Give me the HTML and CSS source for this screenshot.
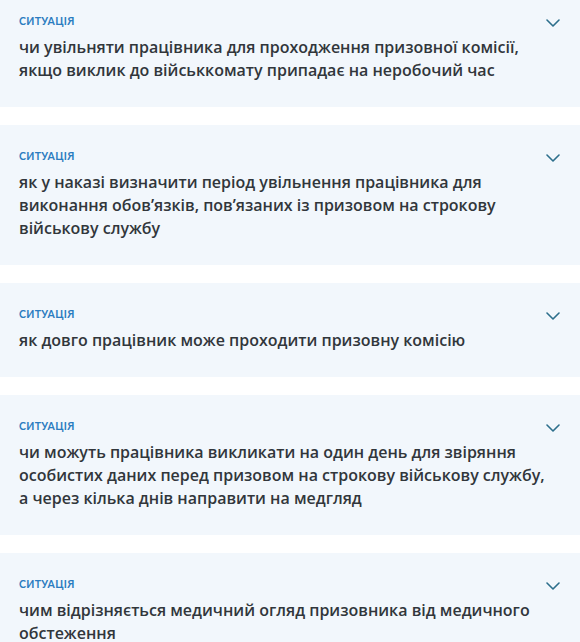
FILE: index.html
```html
<!DOCTYPE html>
<html lang="uk">
<head>
<meta charset="utf-8">
<title>Ситуації</title>
<link rel="stylesheet" href="styles.css">
</head>
<body>
<div class="list">
  <div class="item">
    <div class="item-head">
      <span class="tag">Ситуація</span>
      <svg class="chev" viewBox="0 0 14 8" width="14" height="8"><path d="M1 1l6 6 6-6"/></svg>
    </div>
    <div class="title">чи увільняти працівника для проходження призовної комісії, якщо виклик до військкомату припадає на неробочий час</div>
  </div>
  <div class="item">
    <div class="item-head">
      <span class="tag">Ситуація</span>
      <svg class="chev" viewBox="0 0 14 8" width="14" height="8"><path d="M1 1l6 6 6-6"/></svg>
    </div>
    <div class="title">як у наказі визначити період увільнення працівника для виконання обов’язків, пов’язаних із призовом на строкову військову службу</div>
  </div>
  <div class="item">
    <div class="item-head">
      <span class="tag">Ситуація</span>
      <svg class="chev" viewBox="0 0 14 8" width="14" height="8"><path d="M1 1l6 6 6-6"/></svg>
    </div>
    <div class="title">як довго працівник може проходити призовну комісію</div>
  </div>
  <div class="item">
    <div class="item-head">
      <span class="tag">Ситуація</span>
      <svg class="chev" viewBox="0 0 14 8" width="14" height="8"><path d="M1 1l6 6 6-6"/></svg>
    </div>
    <div class="title">чи можуть працівника викликати на один день для звіряння особистих даних перед призовом на строкову військову службу, а через кілька днів направити на медгляд</div>
  </div>
  <div class="item">
    <div class="item-head">
      <span class="tag">Ситуація</span>
      <svg class="chev" viewBox="0 0 14 8" width="14" height="8"><path d="M1 1l6 6 6-6"/></svg>
    </div>
    <div class="title">чим відрізняється медичний огляд призовника від медичного обстеження</div>
  </div>
</div>
</body>
</html>
```
FILE: styles.css
```css
html, body {
  margin: 0;
  padding: 0;
  background: #ffffff;
}

body {
  font-family: "Open Sans", Lato, sans-serif;
  overflow: hidden;
}

.list {
  display: flex;
  flex-direction: column;
  gap: 18px;
  margin-top: -10px;
}

.item {
  background: #f2f7fc;
  padding: 25px 28px 25px 19px;
}

.item-head {
  display: flex;
  justify-content: space-between;
  align-items: center;
  height: 12px;
}

.tag {
  font-family: Lato, sans-serif;
  font-size: 10.5px;
  font-weight: 700;
  text-transform: uppercase;
  letter-spacing: 0.3px;
  color: #2b7cc0;
  line-height: 12px;
}

.chev {
  fill: none;
  stroke: #2d6f8c;
  stroke-width: 1.6;
  stroke-linecap: round;
  stroke-linejoin: round;
  margin-top: 4px;
  margin-right: -8px;
}

.title {
  margin-top: 9px;
  font-size: 16px;
  font-weight: 600;
  line-height: 23px;
  color: #31363b;
  max-width: 540px;
}
```
